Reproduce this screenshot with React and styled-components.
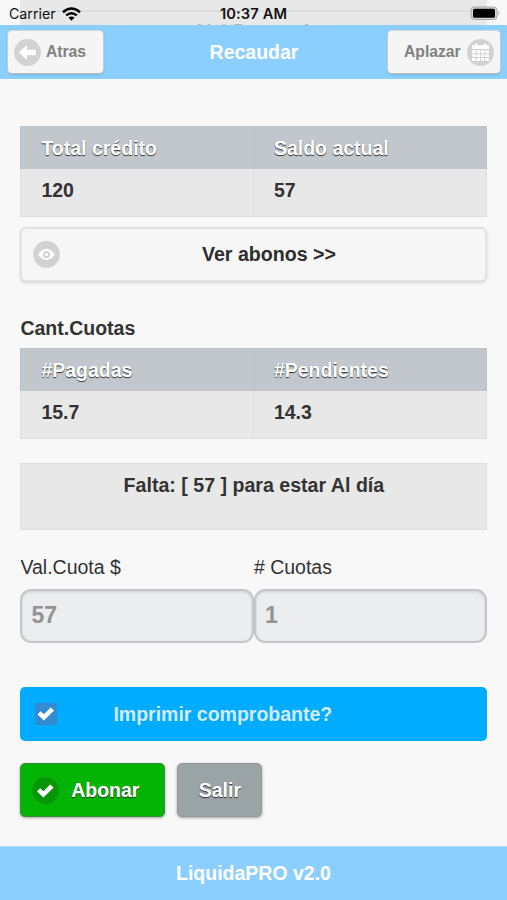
import React from "react";
import styled, { createGlobalStyle } from "styled-components";

const GlobalStyle = createGlobalStyle`
  * { box-sizing: border-box; }
  body {
    margin: 0;
    background: #f8f8f8;
    color: #333;
    font-family: "Liberation Sans", Arial, sans-serif;
    font-size: 19.5px;
  }
`;

const Screen = styled.div`
  width: 507px;
  height: 900px;
  display: flex;
  flex-direction: column;
  overflow: hidden;
`;

const StatusBar = styled.div`
  height: 25px;
  flex: none;
  display: grid;
  grid-template-columns: 1fr auto 1fr;
  align-items: center;
  padding: 2px 6px 0 9px;
  font-family: Inter, sans-serif;
  color: #111;
  background:
    linear-gradient(#dedede, #dedede) 20px 10px / 467px 2px no-repeat,
    linear-gradient(#e8e8e8, #e8e8e8) 20px 0 / 467px 25px no-repeat,
    #f8f8f8;
  position: relative;
`;

const Carrier = styled.div`
  display: flex;
  align-items: center;
  gap: 6px;
  font-size: 14.2px;
`;

const Clock = styled.div`
  font-size: 14.7px;
  font-weight: 600;
  letter-spacing: 0.1px;
  margin-right: 3px;
`;

const BatterySlot = styled.div`
  display: flex;
  justify-content: flex-end;
`;

const ScrolledMarks = styled.svg`
  position: absolute;
  left: 190px;
  bottom: 0;
`;

const Header = styled.header`
  height: 54px;
  flex: none;
  display: grid;
  grid-template-columns: 1fr auto 1fr;
  align-items: center;
  padding: 0 7px 0 8px;
  background: #8acfff;
`;

const Title = styled.h1`
  margin: 0;
  font-size: 19.5px;
  line-height: 24px;
  color: #fff;
`;

const HeaderButton = styled.button`
  height: 42px;
  width: ${(p) => p.$width}px;
  justify-self: ${(p) => p.$side};
  display: flex;
  align-items: center;
  justify-content: space-between;
  padding: ${(p) => (p.$side === "end" ? "0 6px 0 16px" : "0 17px 0 6px")};
  border: 0;
  border-radius: 4px;
  background: #f5f5f5;
  box-shadow: 0 1px 3px rgba(0, 0, 0, 0.25), 0 0 0 1px #dcdfe2;
  font: bold 15.7px "Liberation Sans", Arial, sans-serif;
  color: #818181;
`;

const Content = styled.main`
  flex: 1;
  padding: 47px 19.6px 0 20.4px;
  display: flex;
  flex-direction: column;
`;

const Table = styled.div`
  display: grid;
  grid-template-columns: 1fr 1fr;
`;

const HeadCell = styled.div`
  height: 43px;
  padding: 0 20px;
  border: 1px solid #b9c4c8;
  border-bottom: 0;
  background: #c1c7cd;
  color: #fff;
  font-weight: bold;
  line-height: 42px;
  text-shadow: 0 1px 1px #333;
  & + & { border-left: 0; }
`;

const Cell = styled.div`
  height: 48px;
  padding: 0 20px;
  border: 1px solid #dedede;
  border-top: 0;
  background: #e8e8e8;
  font-weight: bold;
  line-height: 43px;
  & + & { border-left: 0; }
`;

const WideButton = styled.button`
  height: 55px;
  margin-top: 10px;
  padding: 0 0 0 11px;
  display: grid;
  grid-template-columns: 26px 1fr;
  align-items: center;
  border: 2px solid #e2e2e2;
  border-radius: 6px;
  background: #f6f6f6;
  box-shadow: 0 1px 3px rgba(0, 0, 0, 0.15);
  font: bold 19.6px "Liberation Sans", Arial, sans-serif;
  color: #2d2d2d;
`;

const WideLabel = styled.span`
  text-align: center;
  padding-right: 7px;
`;

const SectionTitle = styled.h2`
  margin: 34px 0 8px;
  height: 24px;
  font-size: 19.5px;
  line-height: 24px;
`;

const Notice = styled.div`
  height: 67px;
  margin-top: 24px;
  border: 1px solid #dedede;
  background: #e8e8e8;
  text-align: center;
  font-weight: bold;
  font-size: 19.6px;
  line-height: 42px;
`;

const Fields = styled.div`
  display: grid;
  grid-template-columns: 1fr 1fr;
  margin-top: 25px;
`;

const Field = styled.label`
  display: flex;
  flex-direction: column;
  line-height: 24px;
  gap: 10px;
`;

const Input = styled.input`
  width: 100%;
  height: 54px;
  padding: 0 9px 2px;
  border: 2px solid #c1c8ca;
  border-radius: 11px;
  background: #ebedee;
  box-shadow: inset 0 1px 3px rgba(0, 0, 0, 0.13);
  font: bold 23px "Liberation Sans", Arial, sans-serif;
  color: #929494;
  outline: 0;
`;

const PrintOption = styled.div`
  height: 54px;
  margin-top: 44px;
  padding-left: 15px;
  display: grid;
  grid-template-columns: 22px auto;
  justify-content: start;
  gap: 56px;
  align-items: center;
  border-radius: 5px;
  background: #00acff;
  color: #d3ebf8;
  font-weight: bold;
`;

const Actions = styled.div`
  display: flex;
  gap: 12px;
  margin-top: 22px;
`;

const ActionButton = styled.button`
  height: 54px;
  width: ${(p) => p.$width}px;
  padding: 0 ${(p) => (p.$padded ? "25px 0 11px" : "0")};
  display: flex;
  align-items: center;
  justify-content: ${(p) => (p.$padded ? "space-between" : "center")};
  border: 1px solid ${(p) => p.$edge};
  border-radius: 5px;
  background: ${(p) => p.$fill};
  box-shadow: 0 1px 3px rgba(0, 0, 0, 0.35);
  color: #fff;
  font: bold 19.5px "Liberation Sans", Arial, sans-serif;
  text-shadow: 0 1px 1px #333;
`;

const Footer = styled.footer`
  height: 54px;
  flex: none;
  border-top: 1px solid #b3d9f2;
  background: #8acfff;
  color: #fff;
  text-align: center;
  font-weight: bold;
  line-height: 53px;
`;

const TICK = "M8.2 11.2 L11.4 14.3 L18.2 7.4 L21.6 10.5 L11.4 20.6 L5 14.4 Z";

const DiscIcon = ({ fill, children }) => (
  <svg width="27" height="27" viewBox="0 0 27 27">
    <circle cx="13.5" cy="13.5" r="13.4" fill={fill} />
    {children}
  </svg>
);

const BackIcon = () => (
  <DiscIcon fill="#d2d2d2">
    <path d="M4.8 13.5 L13 6 V10.8 H21.8 V16.2 H13 V21 Z" fill="#fff" />
  </DiscIcon>
);

const CalendarIcon = () => (
  <DiscIcon fill="#d2d2d2">
    <path d="M5 6 H8 V4.5 H10 V6 H17 V4.5 H19 V6 H22 V10 H5 Z M5 11.3 H22 V22 H5 Z" fill="#fff" />
    <path d="M5 14.9 H22 M5 18.5 H22 M9.2 11.3 V22 M13.5 11.3 V22 M17.8 11.3 V22" stroke="#d2d2d2" strokeWidth="1" />
  </DiscIcon>
);

const EyeIcon = () => (
  <DiscIcon fill="#d2d2d2">
    <path d="M5 13.5 Q13.5 2.2 22 13.5 Q13.5 24.4 5 13.5 Z" fill="#fff" />
    <circle cx="13.5" cy="13.5" r="2.6" fill="#fff" stroke="#d2d2d2" strokeWidth="2" />
  </DiscIcon>
);

const TickIcon = () => (
  <DiscIcon fill="#079607">
    <path d={TICK} fill="#fff" />
  </DiscIcon>
);

const CheckboxIcon = () => (
  <svg width="22" height="22" viewBox="2.5 3 22 22">
    <rect x="2.5" y="3" width="22" height="22" rx="2.5" fill="#358bd2" />
    <path d={TICK} fill="#fff" />
  </svg>
);

const WifiIcon = () => (
  <svg width="19" height="14" viewBox="0 0 19 14">
    <g fill="none" stroke="#000" strokeWidth="2.5">
      <path d="M1 5.2 Q9.5 -2.2 18 5.2" />
      <path d="M4.1 8.4 Q9.5 4 14.9 8.4" />
    </g>
    <path d="M6.4 10.6 Q9.5 8.2 12.6 10.6 L9.5 13.7 Z" fill="#000" />
  </svg>
);

const BatteryIcon = () => (
  <svg width="31" height="15" viewBox="0 0 31 15">
    <rect x="1" y="1" width="26" height="12.5" rx="3.5" fill="#d6d6d6" stroke="#a5a5a5" />
    <rect x="3" y="2.8" width="22" height="9" rx="1.5" fill="#000" />
    <path d="M28.4 5 Q30.4 7.2 28.4 9.5 Z" fill="#a5a5a5" />
  </svg>
);

export default function App() {
  return (
    <Screen>
      <GlobalStyle />
      <StatusBar>
        <ScrolledMarks width="120" height="2" viewBox="0 0 120 2">
          <path d="M8 1.5 H11 M18 1.5 H20 M33 1.5 H35 M44 1.5 H52 M115 1.5 H118" stroke="#b4b8bb" strokeWidth="1" />
        </ScrolledMarks>
        <Carrier>Carrier <WifiIcon /></Carrier>
        <Clock>10:37 AM</Clock>
        <BatterySlot><BatteryIcon /></BatterySlot>
      </StatusBar>
      <Header>
        <HeaderButton $width={95} $side="start"><BackIcon />Atras</HeaderButton>
        <Title>Recaudar</Title>
        <HeaderButton $width={112} $side="end">Aplazar<CalendarIcon /></HeaderButton>
      </Header>
      <Content>
        <Table>
          <HeadCell>Total crédito</HeadCell>
          <HeadCell>Saldo actual</HeadCell>
          <Cell>120</Cell>
          <Cell>57</Cell>
        </Table>
        <WideButton><EyeIcon /><WideLabel>Ver abonos &gt;&gt;</WideLabel></WideButton>
        <SectionTitle>Cant.Cuotas</SectionTitle>
        <Table>
          <HeadCell>#Pagadas</HeadCell>
          <HeadCell>#Pendientes</HeadCell>
          <Cell>15.7</Cell>
          <Cell>14.3</Cell>
        </Table>
        <Notice>Falta: [ 57 ] para estar Al día</Notice>
        <Fields>
          <Field>Val.Cuota $<Input defaultValue="57" /></Field>
          <Field># Cuotas<Input defaultValue="1" /></Field>
        </Fields>
        <PrintOption><CheckboxIcon />Imprimir comprobante?</PrintOption>
        <Actions>
          <ActionButton $width={145} $fill="#04b404" $edge="#388d38" $padded><TickIcon />Abonar</ActionButton>
          <ActionButton $width={85} $fill="#9aa3a6" $edge="#92999b">Salir</ActionButton>
        </Actions>
      </Content>
      <Footer>LiquidaPRO v2.0</Footer>
    </Screen>
  );
}
